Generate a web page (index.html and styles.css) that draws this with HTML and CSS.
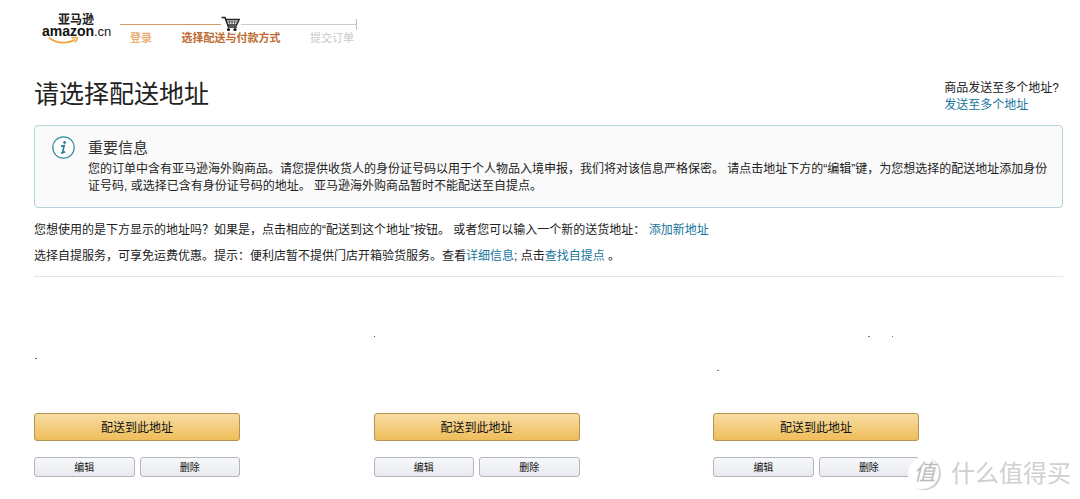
FILE: index.html
```html
<!DOCTYPE html>
<html lang="zh-CN">
<head>
<meta charset="utf-8">
<meta name="viewport" content="width=device-width, initial-scale=1">
<title>请选择配送地址</title>
<link rel="stylesheet" href="styles.css">
</head>
<body>
<header class="checkout-header">
  <a class="logo" href="#" aria-label="亚马逊 amazon.cn">
    <svg width="72" height="38" viewBox="0 0 72 38">
      <text class="logo-cn" x="16" y="16">亚马逊</text>
      <text class="logo-name" x="0" y="28">amazon</text>
      <text class="logo-tld" x="52" y="28">.cn</text>
      <path d="M7 29.500 C14 36 26 36 33 31.500" fill="none" stroke="#f0a63c" stroke-width="1.8"/>
      <path d="M29.500 30 Q33 29 35.500 29.900 Q35 32.500 33 34.500" fill="none" stroke="#f0a63c" stroke-width="1.4"/>
    </svg>
  </a>
  <div class="progress">
    <div class="track">
      <span class="track-done"></span>
      <svg class="cart" width="20" height="16" viewBox="0 0 20 16" aria-hidden="true">
        <path d="M0.500 1.500H4L7.500 11H16M4.800 3.500H18L15.500 9H6.800" fill="none" stroke="#222" stroke-width="1.6"/>
        <path d="M8 3.500L9 9M11 3.500V9M14 3.500L13.500 9M6 6H17" stroke="#555" stroke-width="1"/>
        <circle cx="7.500" cy="13.500" r="1.600" fill="#111"/>
        <circle cx="14" cy="13.500" r="1.600" fill="#111"/>
      </svg>
      <span class="track-todo"></span>
    </div>
    <ol class="steps">
      <li class="step step-done">登录</li>
      <li class="step step-current" aria-current="step">选择配送与付款方式</li>
      <li class="step step-todo">提交订单</li>
    </ol>
  </div>
</header>
<main class="content">
  <div class="title-row">
    <h1 class="title">请选择配送地址</h1>
    <div class="multi">
      <div>商品发送至多个地址?</div>
      <a href="#">发送至多个地址</a>
    </div>
  </div>
  <section class="notice">
    <svg class="notice-icon" width="23" height="23" viewBox="0 0 23 23" aria-hidden="true">
      <circle cx="11.500" cy="11.500" r="10.700" fill="#fff" stroke="#3a8ba3" stroke-width="1.200"/>
      <circle cx="12.600" cy="6.500" r="1.400" fill="#2a7f98"/>
      <path d="M9 10.200L12.200 9.500L10.600 16.200Q10.700 17.200 13.200 15.600M9 17H11" fill="none" stroke="#2a7f98" stroke-width="1.600"/>
    </svg>
    <div class="notice-body">
      <h2 class="notice-title">重要信息</h2>
      <p class="notice-text">您的订单中含有亚马逊海外购商品。请您提供收货人的身份证号码以用于个人物品入境申报，我们将对该信息严格保密。 请点击地址下方的“编辑”键，为您想选择的配送地址添加身份证号码, 或选择已含有身份证号码的地址。 亚马逊海外购商品暂时不能配送至自提点。</p>
    </div>
  </section>
  <div class="intro">
    <p>您想使用的是下方显示的地址吗？如果是，点击相应的“配送到这个地址”按钮。 或者您可以输入一个新的送货地址： <a href="#">添加新地址</a></p>
    <p>选择自提服务，可享免运费优惠。提示：便利店暂不提供门店开箱验货服务。查看<a href="#">详细信息</a>; 点击<a href="#">查找自提点</a> 。</p>
  </div>
  <div class="addresses">
    <article class="address">
      <svg class="address-details" viewBox="0 0 206 136" aria-hidden="true"><path d="M1 81h2v1h-2z" fill="#666"/></svg>
      <button class="btn btn-primary" type="button">配送到此地址</button>
      <div class="actions">
        <button class="btn btn-small" type="button">编辑</button>
        <button class="btn btn-small" type="button">删除</button>
      </div>
    </article>
    <article class="address">
      <svg class="address-details" viewBox="0 0 206 136" aria-hidden="true"><path d="M0 59h1v1h-1z" fill="#555"/></svg>
      <button class="btn btn-primary" type="button">配送到此地址</button>
      <div class="actions">
        <button class="btn btn-small" type="button">编辑</button>
        <button class="btn btn-small" type="button">删除</button>
      </div>
    </article>
    <article class="address">
      <svg class="address-details" viewBox="0 0 206 136" aria-hidden="true"><path d="M155 59h2v1h-2zM179 59h1v1h-1zM4 93h2v1h-2z" fill="#777"/></svg>
      <button class="btn btn-primary" type="button">配送到此地址</button>
      <div class="actions">
        <button class="btn btn-small" type="button">编辑</button>
        <button class="btn btn-small" type="button">删除</button>
      </div>
    </article>
  </div>
</main>
<div class="watermark">
  <span class="watermark-badge">值</span>
  <span class="watermark-name">什么值得买</span>
</div>
</body>
</html>
```
FILE: styles.css
```css
* { box-sizing: border-box; }

body {
  position: relative;
  margin: 0;
  padding: 8px 17px 22px 34px;
  background: #fff;
  color: #222;
  font: 12px/17px "Liberation Sans", "Noto Sans CJK SC", sans-serif;
}

h1, h2, p, ol { margin: 0; padding: 0; font-weight: 400; }
a { color: #16759c; text-decoration: none; }

.checkout-header { display: flex; gap: 6px; padding-left: 8px; }
.logo, .logo svg { display: block; }
.logo-cn { font: 700 12px "Noto Sans CJK SC", sans-serif; fill: #222; }
.logo-name { font: 700 14px "Liberation Sans", sans-serif; fill: #111; }
.logo-tld { font: 13px "Liberation Sans", sans-serif; fill: #222; }

.progress { width: 237px; padding-top: 8px; }
.track { display: flex; align-items: center; height: 16px; }
.track-done { width: 101px; height: 1px; background: #d09a62; }
.cart { flex: none; }
.track-todo {
  flex: 1;
  height: 11px;
  border-right: 1px solid #bbb;
  background: linear-gradient(#ccc, #ccc) center / 100% 1px no-repeat;
}
.steps {
  display: flex;
  justify-content: space-between;
  padding: 0 3px 0 10px;
  list-style: none;
  font-size: 11px;
  line-height: 13px;
}
.step-done { color: #eab078; font-weight: 700; }
.step-current { color: #bd6b32; font-weight: 700; }
.step-todo { color: #c8c8c8; }

.title-row { display: flex; justify-content: space-between; padding-top: 30px; }
.title { font-size: 25px; line-height: 36px; }
.multi { padding: 4px 4px 0 0; }

.notice {
  display: flex;
  gap: 13px;
  margin-top: 11px;
  padding: 10px 6px 12px 17px;
  border: 1px solid #b5d3da;
  border-radius: 4px;
  background: #fafafa;
}
.notice-icon { flex: none; }
.notice-title { padding-bottom: 2px; font-size: 15px; line-height: 23px; color: #333; }

.intro {
  display: grid;
  gap: 9px;
  padding: 14px 0 11px;
  border-bottom: 1px solid #e5e5e5;
}

.addresses { display: grid; grid-template-columns: repeat(3, 33%); }
.address { width: 206px; max-width: 100%; }
.address-details { display: block; width: 100%; height: 136px; }
.btn {
  display: block;
  padding: 0 0 2px;
  border: 1px solid #b3b6bd;
  border-radius: 3px;
  color: #111;
  font-family: inherit;
  cursor: pointer;
}
.btn-primary {
  width: 100%;
  height: 28px;
  border-color: #b59250;
  background: linear-gradient(#f7dda4, #efbd59);
  font-size: 12px;
}
.actions { display: grid; grid-template-columns: 1fr 1fr; gap: 5px; margin-top: 16px; }
.btn-small { height: 20px; background: linear-gradient(#f7f8fa, #e8eaef); font-size: 10px; }

.watermark {
  position: absolute;
  right: 9px;
  bottom: 9px;
  display: flex;
  align-items: center;
  gap: 10px;
  color: #d0d0d0;
  text-shadow: -1px -1px #fff;
}
.watermark-badge {
  width: 33px;
  height: 33px;
  border-radius: 50%;
  background: #fff;
  box-shadow: inset -2px -1px #d0d0d0;
  color: #bbb;
  font-size: 22px;
  font-style: italic;
  line-height: 31px;
  text-align: center;
}
.watermark-name { font-size: 24px; line-height: 32px; }
```
